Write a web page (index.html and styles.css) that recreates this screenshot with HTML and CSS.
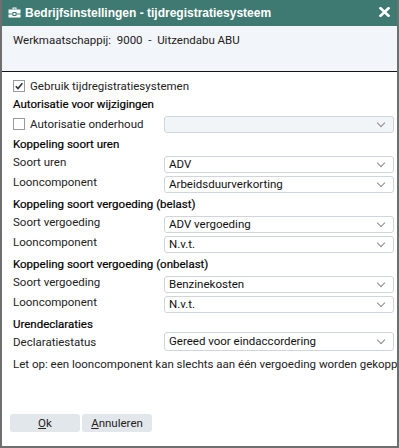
FILE: index.html
```html
<!DOCTYPE html>
<html lang="nl">
<head>
<meta charset="utf-8">
<title>Bedrijfsinstellingen - tijdregistratiesysteem</title>
<link rel="stylesheet" href="styles.css">
</head>
<body>
<div class="window">
  <div class="titlebar">
    <svg class="title-icon" width="13" height="11" viewBox="0 0 13 11">
      <path d="M4.5 0.5h4v2h-1v-1h-2v1h-1z" fill="#fff"/>
      <rect x="0.5" y="2.5" width="12" height="4" fill="#fff"/>
      <rect x="0.5" y="7.5" width="12" height="3" fill="#fff"/>
      <rect x="5" y="5.5" width="3" height="3" fill="#fff" stroke="#3f7a72" stroke-width="1"/>
    </svg>
    <span class="title-text">Bedrijfsinstellingen - tijdregistratiesysteem</span>
    <svg class="close" width="11" height="10" viewBox="0 0 11 10">
      <path d="M1.5 1.2 L9.5 8.8 M9.5 1.2 L1.5 8.8" stroke="#fff" stroke-width="2.6" stroke-linecap="square"/>
    </svg>
  </div>
  <div class="header">Werkmaatschappij:&nbsp; 9000&nbsp; -&nbsp; Uitzendabu ABU</div>
  <div class="content">
    <div class="check-row first">
      <span class="checkbox checked">
        <svg width="10" height="10" viewBox="0 0 10 10"><path d="M1.8 5.2 L4 7.5 L8.4 2.2" fill="none" stroke="#333" stroke-width="1.6"/></svg>
      </span>
      <span>Gebruik tijdregistratiesystemen</span>
    </div>
    <div class="section">Autorisatie voor wijzigingen</div>
    <div class="row">
      <div class="label check-label"><span class="checkbox"></span><span>Autorisatie onderhoud</span></div>
      <div class="select disabled"><span></span><i class="chev"></i></div>
    </div>
    <div class="section">Koppeling soort uren</div>
    <div class="row">
      <div class="label">Soort uren</div>
      <div class="select"><span>ADV</span><i class="chev"></i></div>
    </div>
    <div class="row">
      <div class="label">Looncomponent</div>
      <div class="select"><span>Arbeidsduurverkorting</span><i class="chev"></i></div>
    </div>
    <div class="section">Koppeling soort vergoeding (belast)</div>
    <div class="row">
      <div class="label">Soort vergoeding</div>
      <div class="select"><span>ADV vergoeding</span><i class="chev"></i></div>
    </div>
    <div class="row">
      <div class="label">Looncomponent</div>
      <div class="select"><span>N.v.t.</span><i class="chev"></i></div>
    </div>
    <div class="section">Koppeling soort vergoeding (onbelast)</div>
    <div class="row">
      <div class="label">Soort vergoeding</div>
      <div class="select"><span>Benzinekosten</span><i class="chev"></i></div>
    </div>
    <div class="row">
      <div class="label">Looncomponent</div>
      <div class="select"><span>N.v.t.</span><i class="chev"></i></div>
    </div>
    <div class="section short">Urendeclaraties</div>
    <div class="row tall">
      <div class="label lower">Declaratiestatus</div>
      <div class="select taller"><span>Gereed voor eindaccordering</span><i class="chev"></i></div>
    </div>
    <div class="note">Let op: een looncomponent kan slechts aan één vergoeding worden gekoppeld.</div>
    <div class="footer">
      <button class="btn"><u>O</u>k</button>
      <button class="btn"><u>A</u>nnuleren</button>
    </div>
  </div>
</div>
</body>
</html>
```

FILE: styles.css
```css
* { box-sizing: border-box; }
html, body { margin: 0; padding: 0; background: #fff; }
body {
  font-family: Roboto, "Liberation Sans", Arial, sans-serif;
  font-size: 11.5px;
  color: #222;
}
.window {
  width: 399px;
  height: 448px;
  border: 2px solid #6f6f6f;
  border-top: none;
  display: flex;
  flex-direction: column;
  overflow: hidden;
}
.titlebar {
  height: 26px;
  margin: 0 -2px;
  background: #3f7a72;
  color: #fff;
  display: flex;
  align-items: center;
  padding: 0 9px 0 8px;
  flex: none;
}
.title-icon { flex: none; margin-right: 4px; margin-top: -1px; }
.title-text {
  font-family: "Liberation Sans", Arial, sans-serif;
  font-weight: bold;
  font-size: 12px;
  flex: 1;
  margin-top: -1px;
}
.close { flex: none; margin-top: -2px; }
.header {
  height: 45px;
  background: #f2f5f9;
  padding: 6px 0 0 11px;
  line-height: 16px;
  color: #222;
  flex: none;
}
.content {
  flex: 1;
  border-top: 1px solid #151515;
  padding: 6px 0 14px 11px;
  display: flex;
  flex-direction: column;
  white-space: nowrap;
  overflow: hidden;
}
.check-row {
  height: 16px;
  display: flex;
  align-items: center;
  gap: 5px;
}
.checkbox {
  width: 12px;
  height: 12px;
  border: 1px solid #9a9a9a;
  background: #fff;
  display: inline-flex;
  align-items: center;
  justify-content: center;
  flex: none;
}
.checkbox svg { display: block; }
.section {
  height: 20px;
  line-height: 20px;
  font-weight: 400;
  color: #000;
  -webkit-text-stroke: 0.2px #000;
}
.section.short { height: 18px; line-height: 20px; }
.row {
  height: 20px;
  display: flex;
  align-items: flex-start;
}
.row.tall { height: 21px; }
.label {
  width: 151px;
  flex: none;
  line-height: 16px;
}
.label.lower { line-height: 20px; }
.check-label {
  display: flex;
  align-items: center;
  gap: 5px;
  height: 20px;
}
.select {
  margin-top: 2px;
  width: 230px;
  height: 17px;
  border: 1px solid #cfd5db;
  border-radius: 3px;
  background: #fff;
  display: flex;
  align-items: center;
  padding: 0 0 0 4px;
  color: #111;
}
.select.taller { height: 19px; margin-top: 0; }
.select span { flex: 1; line-height: 15px; }
.select.disabled { background: #f2f5f8; }
.chev {
  width: 6px;
  height: 6px;
  border-right: 1px solid #8a8a8a;
  border-bottom: 1px solid #8a8a8a;
  transform: rotate(45deg);
  margin: -4px 9px 0 0;
}
.note {
  margin-top: 2px;
  line-height: 18px;
  color: #222;
}
.footer {
  margin-top: auto;
  margin-left: -3px;
  display: flex;
  gap: 2px;
}
.btn {
  width: 70px;
  height: 18px;
  border: none;
  border-radius: 3px;
  background: #e2e7eb;
  font-family: Roboto, "Liberation Sans", Arial, sans-serif;
  font-size: 11.5px;
  color: #222;
  padding: 0;
  line-height: 18px;
}
.btn u { text-underline-offset: 1px; }
```
